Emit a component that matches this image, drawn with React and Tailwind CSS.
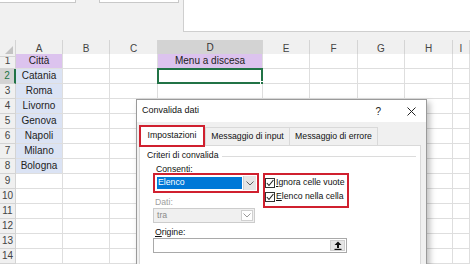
import React from "react";

const COLS = "grid grid-cols-[16px_47px_47px_48px_105px_47px_48px_47px_48px_1fr]";
const letters = ["A", "B", "C", "D", "E", "F", "G", "H", "I"];
const cities = ["Città", "Catania", "Roma", "Livorno", "Genova", "Napoli", "Milano", "Bologna"];

function Chevron({ color = "#606060" }) {
  return (
    <svg width="8" height="5" viewBox="0 0 8 5">
      <polyline points="0.5,0.5 4,4 7.5,0.5" fill="none" stroke={color} strokeWidth="1" />
    </svg>
  );
}

function Check() {
  return (
    <div className="w-[10px] h-[10px] border border-[#333] bg-white flex items-center justify-center">
      <svg width="8" height="8" viewBox="0 0 8 8">
        <polyline points="0.8,4 3,6.5 7.4,1" fill="none" stroke="#222" strokeWidth="1.1" />
      </svg>
    </div>
  );
}

function Cell({ r, c }) {
  let bg = "bg-white";
  let text = "";
  if (c === 0 && r <= 8) {
    bg = r === 1 ? "bg-[#dcc3ee]" : "bg-[#dbe3f4]";
    text = cities[r - 1];
  }
  if (c === 3 && r === 1) {
    bg = "bg-[#dcc3ee]";
    text = "Menu a discesa";
  }
  const sel = c === 3 && r === 2;
  return (
    <div className={`relative h-[15px] border-r border-b border-[#dedede] ${bg} flex items-center justify-center text-[10px] leading-none text-[#222]`}>
      {text}
      {sel && (
        <div className="absolute left-[-1px] top-[-1px] right-[-1px] bottom-[-1px] border-2 border-[#217346]">
          <div className="absolute right-[-3px] bottom-[-3px] w-[4px] h-[4px] bg-[#217346] border border-white" />
        </div>
      )}
    </div>
  );
}

export default function App() {
  return (
    <div className="relative w-[470px] h-[264px] overflow-hidden bg-white" style={{ fontFamily: '"Liberation Sans", Arial, sans-serif' }}>
      {/* top ribbon / formula area */}
      <div className="h-[40px] bg-[#f1f1f1] flex items-start">
        <div className="w-[76px] h-[3px] bg-white border-b border-r border-[#c8c8c8]" />
        <div className="ml-[23px] w-[80px] h-[3px] bg-white border-b border-l border-r border-[#c8c8c8]" />
        <div className="ml-[4px] flex-1 h-[32px] bg-white border-l border-b border-[#cfcfcf]" />
      </div>

      {/* column header */}
      <div className={`${COLS} h-[14px] bg-[#f0f0f0] text-[10px] text-[#444]`}>
        <div className="relative border-r border-b border-[#d4d4d4]">
          <div className="absolute right-[2px] bottom-[2px] w-0 h-0 border-l-[8px] border-l-transparent border-b-[8px] border-b-[#c3c3c3]" />
        </div>
        {letters.map((l) => (
          <div
            key={l}
            className={`flex items-center justify-center border-r border-[#d4d4d4] ${l === "D" ? "bg-[#d3d3d3] border-b-2 border-b-[#217346] text-[#333]" : "border-b border-b-[#d4d4d4]"}`}
          >
            {l}
          </div>
        ))}
      </div>

      {/* rows */}
      {Array.from({ length: 14 }, (_, i) => i + 1).map((r) => (
        <div key={r} className={COLS}>
          <div
            className={`h-[15px] flex items-center justify-center text-[10px] leading-none border-b border-[#d4d4d4] ${r === 2 ? "bg-[#d3d3d3] text-[#217346] border-r-2 border-r-[#217346]" : "bg-[#f0f0f0] text-[#444] border-r border-r-[#d4d4d4]"}`}
          >
            {r}
          </div>
          {letters.map((l, c) => (
            <Cell key={l} r={r} c={c} />
          ))}
        </div>
      ))}

      {/* dialog */}
      <div className="absolute left-[136px] top-[99px] w-[291px] h-[170px] bg-[#f0f0f0] border border-[#9a9a9a] shadow-[3px_3px_6px_rgba(0,0,0,0.25)] flex flex-col text-[8.7px] text-[#111]">
        <div className="h-[22px] bg-white flex items-center pl-[5px] pr-[10px] shrink-0">
          <span className="text-[9px]">Convalida dati</span>
          <span className="ml-auto text-[10px] text-[#222]">?</span>
          <svg className="ml-[26px]" width="9" height="9" viewBox="0 0 9 9">
            <line x1="0.5" y1="0.5" x2="8.5" y2="8.5" stroke="#222" strokeWidth="1" />
            <line x1="8.5" y1="0.5" x2="0.5" y2="8.5" stroke="#222" strokeWidth="1" />
          </svg>
        </div>

        {/* tabs */}
        <div className="h-[23px] flex items-end pl-[2px] shrink-0">
          <div className="relative z-10 w-[66px] h-[22px] mb-[-2px] bg-white border-2 border-[#d0202f] flex items-center justify-center">
            Impostazioni
          </div>
          <div className="w-[85px] h-[18px] border border-b-0 border-[#d9d9d9] bg-[#f0f0f0] flex items-center justify-center">
            Messaggio di input
          </div>
          <div className="w-[88px] h-[18px] border border-b-0 border-l-0 border-[#d9d9d9] bg-[#f0f0f0] flex items-center justify-center">
            Messaggio di errore
          </div>
        </div>

        {/* panel */}
        <div className="ml-[2px] mr-[5px] flex-1 bg-white border border-[#d9d9d9] pt-[4px]">
          <div className="flex items-center h-[12px] pl-[7px] pr-[4px]">
            <span>Criteri di convalida</span>
            <div className="flex-1 ml-[4px] h-px bg-[#dcdcdc]" />
          </div>

          <div className="pl-[13px] mt-[2px]">
            <div className="flex gap-[4px]">
              {/* left column */}
              <div className="w-[106px]">
                <div className="h-[9px] pl-[3px] leading-[10px] overflow-visible">
                  <span className="underline">C</span>onsenti:
                </div>
                <div className="relative z-10 h-[20px] border-2 border-[#d0202f] p-[1px]">
                  <div className="h-full flex bg-white">
                    <div className="flex-1 m-[1px] bg-[#0078d7] text-white pl-[1px] flex items-center">Elenco</div>
                    <div className="w-[13px] bg-[#e5e5e5] border-l border-[#cfcfcf] flex items-center justify-center">
                      <Chevron />
                    </div>
                  </div>
                </div>
                <div className="h-[15px] pt-[3px] pl-[2px] leading-[12px] text-[#a0a0a0]">Dati:</div>
                <div className="w-[102px] h-[15px] flex bg-[#f0f0f0] border border-[#cccccc]">
                  <div className="flex-1 pl-[3px] flex items-center text-[#8a8a8a]">tra</div>
                  <div className="w-[12px] my-[1px] mr-[1px] bg-white border border-[#d0d0d0] flex items-center justify-center">
                    <Chevron color="#9a9a9a" />
                  </div>
                </div>
              </div>

              {/* right column */}
              <div className="mt-[9px] w-[86px] h-[35px] border-2 border-[#d0202f] pt-[3px] flex flex-col gap-[4px]">
                <div className="flex items-center gap-[1px] h-[10px]">
                  <Check />
                  <span>
                    <span className="underline">I</span>gnora celle vuote
                  </span>
                </div>
                <div className="flex items-center gap-[1px] h-[10px]">
                  <Check />
                  <span>
                    <span className="underline">E</span>lenco nella cella
                  </span>
                </div>
              </div>
            </div>

            <div className="h-[15px] pt-[3px] pl-[2px] leading-[12px]">
              <span className="underline">O</span>rigine:
            </div>
            <div className="w-[194px] h-[15px] flex border border-[#a9a9a9] bg-white">
              <div className="flex-1" />
              <div className="w-[15px] m-[1px] bg-[#e5e5e5] border border-[#cfcfcf] flex items-center justify-center">
                <svg width="8" height="9" viewBox="0 0 8 9">
                  <polygon points="4,0.5 7.5,4 5,4 5,7 3,7 3,4 0.5,4" fill="#111" />
                  <rect x="0.5" y="7.8" width="7" height="1.2" fill="#111" />
                </svg>
              </div>
            </div>
          </div>
        </div>
      </div>
    </div>
  );
}
